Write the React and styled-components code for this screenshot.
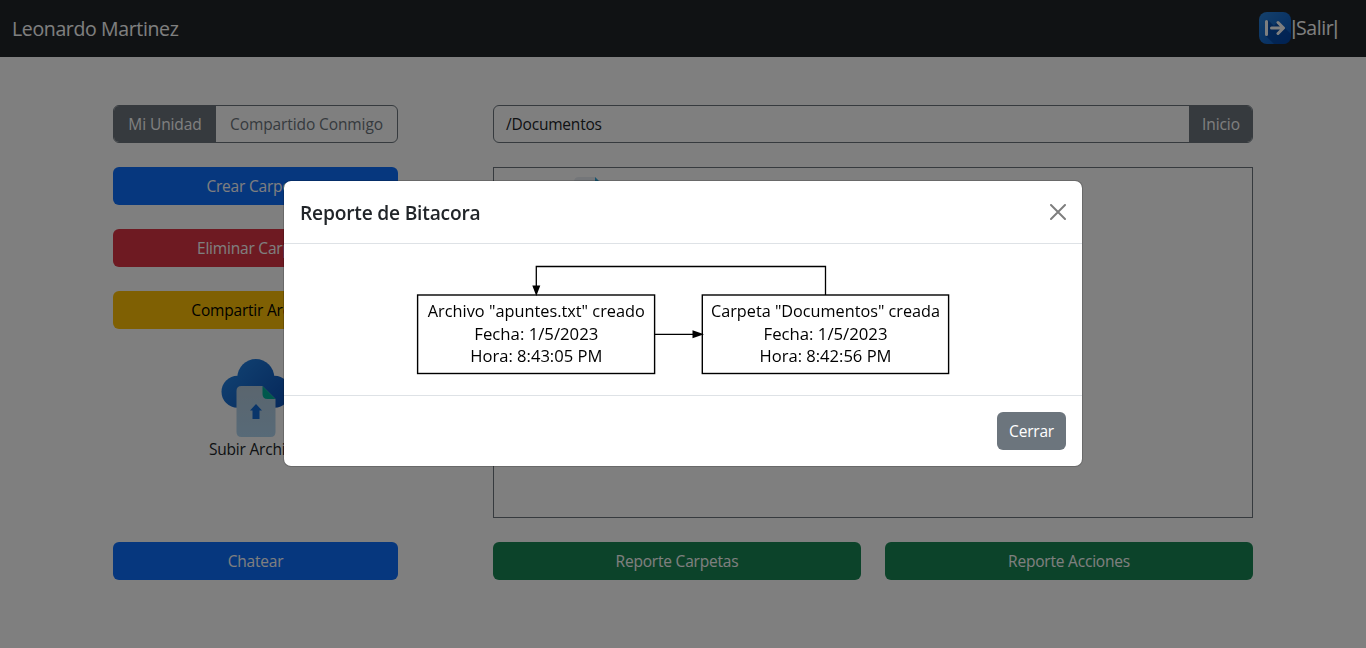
import React from 'react';
import styled, { createGlobalStyle } from 'styled-components';

const GlobalStyle = createGlobalStyle`
  *, *::before, *::after { box-sizing: border-box; }
  body {
    margin: 0;
    height: 648px;
    overflow: hidden;
    background: #fff;
    color: #212529;
    font-family: "Segoe UI", "Open Sans", "Noto Sans", sans-serif;
    font-size: 15.5px;
    line-height: 24px;
    letter-spacing: -0.2px;
  }
`;

const Navbar = styled.nav`
  display: flex;
  align-items: center;
  justify-content: space-between;
  height: 57px;
  padding: 0 28px 0 12px;
  background: #212529;
  color: #fff;
  font-size: 19.5px;
  line-height: 30px;
`;

const Brand = styled.span`
  letter-spacing: -0.36px;
`;

const Logout = styled.a`
  display: flex;
  align-items: center;
  height: 32px;
  margin-bottom: 1px;
  color: #fff;
  letter-spacing: -0.4px;
`;

const Bar = styled.span`
  font-family: "Liberation Sans", sans-serif;
`;

const Container = styled.main`
  display: flex;
  justify-content: space-between;
  width: 1140px;
  margin: 48px auto 0;
`;

const Sidebar = styled.aside`
  display: flex;
  flex-direction: column;
  gap: 24px;
  width: 285px;
  height: 475px;
`;

const Content = styled.section`
  display: flex;
  flex-direction: column;
  gap: 24px;
  width: 760px;
  height: 475px;
`;

const colors = {
  primary: ['#0d6efd', '#fff'],
  danger: ['#dc3545', '#fff'],
  warning: ['#ffc107', '#000'],
  success: ['#198754', '#fff'],
  secondary: ['#6c757d', '#fff'],
};

const Button = styled.button`
  flex: ${(p) => (p.$grow ? 1 : 'none')};
  height: 38px;
  padding: 0 12px;
  border: 0;
  border-radius: 6px;
  background: ${(p) => colors[p.$variant][0]};
  color: ${(p) => colors[p.$variant][1]};
  font: inherit;
  letter-spacing: inherit;
  white-space: nowrap;
`;

const Group = styled.div`
  display: flex;
  height: 38px;
  flex: none;
  border: 1px solid #6c757d;
  border-radius: 6px;
  overflow: hidden;
  letter-spacing: -0.1px;
`;

const Tab = styled.div`
  flex: ${(p) => (p.$active ? '0 0 102px' : 1)};
  display: flex;
  align-items: center;
  justify-content: center;
  background: ${(p) => (p.$active ? '#6c757d' : 'transparent')};
  color: ${(p) => (p.$active ? '#fff' : '#6c757d')};
`;

const Path = styled.div`
  flex: 1;
  padding: 6px 12px;
  letter-spacing: -0.2px;
`;

const HomeButton = styled.div`
  display: flex;
  align-items: center;
  justify-content: center;
  width: 63px;
  padding-left: 1px;
  background: #6c757d;
  color: #fff;
`;

const Upload = styled.div`
  display: flex;
  flex-direction: column;
  align-items: center;
  margin-top: 4px;
`;

const Files = styled.div`
  flex: 1;
  padding: 8px 0 0 65px;
  border: 1px solid #6c757d;
`;

const ButtonRow = styled.div`
  display: flex;
  gap: 24px;
`;

const Spacer = styled.div`
  flex: 1;
`;

const Backdrop = styled.div`
  position: fixed;
  inset: 0;
  display: flex;
  align-items: center;
  justify-content: center;
  padding-bottom: 2px;
  background: rgba(0, 0, 0, 0.5);
`;

const Dialog = styled.div`
  width: 800px;
  background: #fff;
  background-clip: padding-box;
  border: 1px solid rgba(0, 0, 0, 0.175);
  border-radius: 8px;
`;

const DialogHeader = styled.header`
  display: flex;
  align-items: center;
  justify-content: space-between;
  height: 63px;
  padding: 0 16px;
  border-bottom: 1px solid #dee2e6;
`;

const Title = styled.h5`
  margin: 2px 0 0;
  font-size: 19.2px;
  line-height: 30px;
  font-weight: 600;
  letter-spacing: -0.2px;
`;

const CloseIcon = styled.svg`
  display: block;
  width: 16px;
  height: 16px;
  opacity: 0.5;
`;

const DialogBody = styled.div`
  height: 151px;
`;

const DialogFooter = styled.footer`
  display: flex;
  align-items: center;
  justify-content: flex-end;
  height: 71px;
  padding: 0 16px;
  border-top: 1px solid #dee2e6;
`;

const Diagram = styled.svg`
  display: block;
  font-size: 16px;
  letter-spacing: 0;
`;

function LogoutIcon() {
  return (
    <svg width="32" height="32" viewBox="0 0 32 32">
      <defs>
        <linearGradient id="exit" x1="0" y1="0" x2="1" y2="1">
          <stop offset="0" stopColor="#2b83d9" />
          <stop offset="1" stopColor="#0352bd" />
        </linearGradient>
      </defs>
      <rect width="32" height="32" rx="8" fill="url(#exit)" />
      <path d="M6 23 9 8 15 14 19 9 32 22V24Q32 32 24 32H15Z" fill="#003d99" opacity=".65" />
      <path d="M7.500 9.500V22.500M12.500 16H24M19 10.500 24.500 16 19 21.500" fill="none" stroke="#fff" strokeWidth="3" strokeLinecap="round" strokeLinejoin="round" />
    </svg>
  );
}

function CloudUploadIcon() {
  return (
    <svg width="80" height="80" viewBox="0 0 80 80">
      <defs>
        <linearGradient id="cloud" gradientUnits="userSpaceOnUse" x1="10" y1="5" x2="65" y2="55">
          <stop offset="0" stopColor="#2384e5" />
          <stop offset="1" stopColor="#0b50b5" />
        </linearGradient>
        <linearGradient id="paper" x1="0" y1="0" x2="0" y2="1">
          <stop offset="0" stopColor="#b5cbdd" />
          <stop offset="1" stopColor="#afd4ef" />
        </linearGradient>
      </defs>
      <g fill="url(#cloud)">
        <circle cx="21.500" cy="34.700" r="16" />
        <circle cx="58.500" cy="34.700" r="16" />
        <circle cx="39.800" cy="20.500" r="18.500" />
        <rect x="21.500" y="30" width="37" height="20.700" />
      </g>
      <path d="M25.500 29H46.500L59.500 42V75Q59.500 80 54.500 80H25.500Q20.500 80 20.500 75V34Q20.500 29 25.500 29Z" fill="url(#paper)" />
      <path d="M46.500 29 59.500 42H51.500Q46.500 42 46.500 37Z" fill="#00b09b" />
      <path d="M40 47 46 53.500H43.500V62H36.500V53.500H34Z" fill="#126bd5" />
    </svg>
  );
}

function FileIcon() {
  return (
    <svg width="60" height="64" viewBox="0 0 60 64">
      <path d="M20 1H36L49 14V58Q49 62 45 62H19Q15 62 15 58V6Q15 1 20 1Z" fill="#e8edf2" />
      <path d="M36 1 49 14H36Z" fill="#32a8dc" />
    </svg>
  );
}

function Node({ x, width, center, lines }) {
  return (
    <g>
      <rect x={x} y="51" width={width} height="78.500" fill="none" stroke="#000" strokeWidth="1.4" />
      {lines.map((line, i) => (
        <text key={line.text} x={center} y={73.3 + i * 22.4} textAnchor="middle" textLength={line.width} lengthAdjust="spacingAndGlyphs">
          {line.text}
        </text>
      ))}
    </g>
  );
}

function LogDiagram() {
  return (
    <Diagram width="798" height="151" viewBox="0 0 798 151">
      <Node
        x={133.6}
        width={237}
        center={252.3}
        lines={[
          { text: 'Archivo "apuntes.txt" creado', width: 217 },
          { text: 'Fecha: 1/5/2023', width: 124 },
          { text: 'Hora: 8:43:05 PM', width: 132 },
        ]}
      />
      <Node
        x={418.3}
        width={246.3}
        center={541.5}
        lines={[
          { text: 'Carpeta "Documentos" creada', width: 229 },
          { text: 'Fecha: 1/5/2023', width: 124 },
          { text: 'Hora: 8:42:56 PM', width: 132 },
        ]}
      />
      <path d="M541.500 51V22.500H252.300V43M370.600 90.300H410" fill="none" stroke="#000" strokeWidth="1.3" />
      <path d="M248.300 41.500H256.300L252.300 52ZM408.500 86.300V94.300L420 90.300Z" />
    </Diagram>
  );
}

export default function App() {
  return (
    <>
      <GlobalStyle />
      <Navbar>
        <Brand>Leonardo Martinez</Brand>
        <Logout>
          <LogoutIcon />
          <Bar>|</Bar>
          <span>Salir</span>
          <Bar>|</Bar>
        </Logout>
      </Navbar>
      <Container>
        <Sidebar>
          <Group>
            <Tab $active>Mi Unidad</Tab>
            <Tab>Compartido Conmigo</Tab>
          </Group>
          <Button $variant="primary">Crear Carpeta</Button>
          <Button $variant="danger">Eliminar Carpeta</Button>
          <Button $variant="warning">Compartir Archivo</Button>
          <Upload>
            <CloudUploadIcon />
            <span>Subir Archivo</span>
          </Upload>
          <Spacer />
          <Button $variant="primary">Chatear</Button>
        </Sidebar>
        <Content>
          <Group>
            <Path>/Documentos</Path>
            <HomeButton>Inicio</HomeButton>
          </Group>
          <Files>
            <FileIcon />
          </Files>
          <ButtonRow>
            <Button $variant="success" $grow>Reporte Carpetas</Button>
            <Button $variant="success" $grow>Reporte Acciones</Button>
          </ButtonRow>
        </Content>
      </Container>
      <Backdrop>
        <Dialog role="dialog">
          <DialogHeader>
            <Title>Reporte de Bitacora</Title>
            <CloseIcon viewBox="0 0 16 16">
              <path d="M1 1 15 15M15 1 1 15" stroke="#000" strokeWidth="2" strokeLinecap="round" />
            </CloseIcon>
          </DialogHeader>
          <DialogBody>
            <LogDiagram />
          </DialogBody>
          <DialogFooter>
            <Button $variant="secondary">Cerrar</Button>
          </DialogFooter>
        </Dialog>
      </Backdrop>
    </>
  );
}
